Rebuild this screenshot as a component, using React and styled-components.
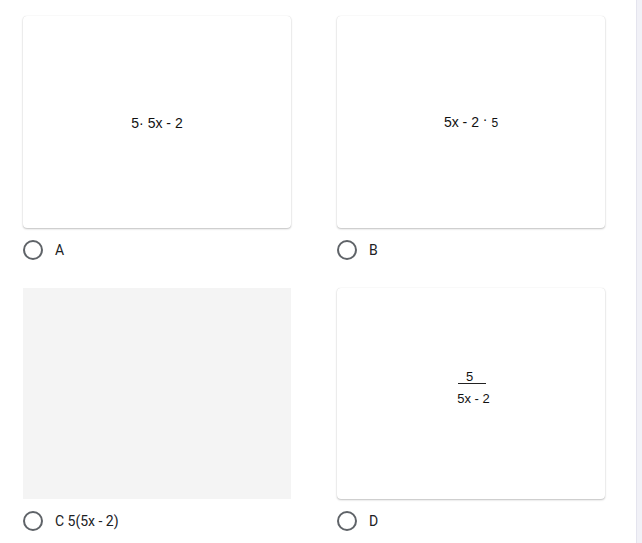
import React from "react";
import styled, { createGlobalStyle } from "styled-components";

const Global = createGlobalStyle`
  html, body { margin: 0; padding: 0; background: #ffffff; }
  body { font-family: Roboto, "Liberation Sans", Arial, sans-serif; color: #202124; overflow: hidden; }
`;

const Page = styled.div`
  display: flex;
  width: 642px;
  height: 543px;
`;

const Content = styled.div`
  flex: 1;
  padding: 16px 0 0 23px;
`;

const Grid = styled.div`
  display: grid;
  grid-template-columns: 268px 268px;
  column-gap: 46px;
  row-gap: 28px;
`;

const Option = styled.div`
  display: flex;
  flex-direction: column;
`;

const Card = styled.div`
  height: ${(p) => p.$h}px;
  display: flex;
  align-items: center;
  justify-content: center;
  background: ${(p) => (p.$blank ? "#f4f4f4" : "#ffffff")};
  border-radius: ${(p) => (p.$blank ? "0" : "4px")};
  box-shadow: ${(p) =>
    p.$blank ? "none" : "0 1px 2px rgba(0,0,0,0.24), 0 0 1px rgba(0,0,0,0.14)"};
  font-family: "Liberation Sans", Arial, sans-serif;
  font-size: 14px;
  color: #111;
`;

const Expr = styled.span`
  white-space: pre;
  margin-top: ${(p) => p.$dy || 0}px;
`;

const Small = styled.span`
  font-size: 12px;
`;

const RaisedDot = styled.span`
  position: relative;
  top: -3px;
`;

const Fraction = styled.div`
  display: flex;
  flex-direction: column;
  align-items: center;
  margin-top: -10px;
  margin-left: 2px;
`;

const Numer = styled.div`
  width: 28px;
  border-bottom: 1px solid #222;
  text-align: left;
  padding-left: 8px;
  box-sizing: border-box;
  font-size: 13px;
  line-height: 12px;
`;

const Denom = styled.div`
  margin-top: 7px;
  margin-left: 3px;
  font-size: 13px;
  line-height: 16px;
`;

const RadioRow = styled.label`
  display: flex;
  align-items: center;
  margin-top: 12px;
  height: 20px;
  font-size: 14px;
  color: #202124;
`;

const Circle = styled.span`
  width: 20px;
  height: 20px;
  box-sizing: border-box;
  border: 2px solid #5f6368;
  border-radius: 50%;
  margin-right: 12px;
`;

const Track = styled.div`
  width: 6px;
  height: 543px;
  background: #f1f1f7;
  border-left: 1px solid #e4e4ee;
  box-sizing: border-box;
`;

export default function App() {
  return (
    <>
      <Global />
      <Page>
        <Content>
          <Grid>
            <Option>
              <Card $h={212}>
                <Expr $dy={1}>5· 5x - 2</Expr>
              </Card>
              <RadioRow>
                <Circle />A
              </RadioRow>
            </Option>
            <Option>
              <Card $h={212}>
                <Expr>
                  5x - 2 <RaisedDot>·</RaisedDot> <Small>5</Small>
                </Expr>
              </Card>
              <RadioRow>
                <Circle />B
              </RadioRow>
            </Option>
            <Option>
              <Card $h={211} $blank />
              <RadioRow>
                <Circle />C 5(5x - 2)
              </RadioRow>
            </Option>
            <Option>
              <Card $h={211}>
                <Fraction>
                  <Numer>5</Numer>
                  <Denom>5x - 2</Denom>
                </Fraction>
              </Card>
              <RadioRow>
                <Circle />D
              </RadioRow>
            </Option>
          </Grid>
        </Content>
        <Track />
      </Page>
    </>
  );
}
